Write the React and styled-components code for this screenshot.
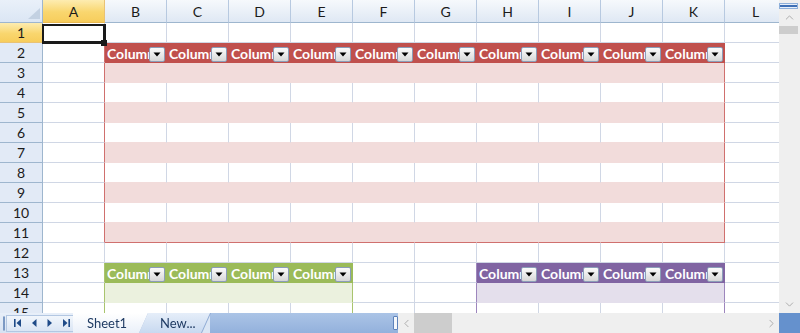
import React from 'react';
import styled, { createGlobalStyle, css } from 'styled-components';
import { ChevronUp, ChevronDown, ChevronLeft, ChevronRight } from 'lucide-react';

const GlobalStyle = createGlobalStyle`
  html, body { margin: 0; padding: 0; width: 800px; height: 333px; overflow: hidden; background: #fff; }
  body { font-family: Lato, "Open Sans", "DejaVu Sans", sans-serif; }
`;

const GRID = '#d0d7e5';
const HEAD_LINE = '#9eb6ce';
const COLS = ['A', 'B', 'C', 'D', 'E', 'F', 'G', 'H', 'I', 'J', 'K', 'L'];
const ROWS = Array.from({ length: 15 }, (_, i) => i + 1);

const TABLES = [
  { r1: 2, r2: 11, c1: 1, c2: 10, head: '#c0504d', band: '#f2dcdb', line: '#d0706e' },
  { r1: 13, r2: 99, c1: 1, c2: 4, head: '#9bbb59', band: '#ebf1de', line: '#a9c46e' },
  { r1: 13, r2: 99, c1: 7, c2: 10, head: '#8064a2', band: '#e4dfec', line: '#9d86bd' },
];

function cellInfo(r, c) {
  let info = { bg: '#fff', right: GRID, bottom: GRID, header: null };
  for (const t of TABLES) {
    const inRows = r >= t.r1 && r <= t.r2;
    if (inRows && c === t.c1 - 1) info.right = t.line;
    if (inRows && c >= t.c1 && c <= t.c2) {
      const idx = r - t.r1;
      const last = c === t.c2;
      if (idx === 0) {
        info = { bg: t.head, right: t.head, bottom: t.head, header: `Column${c - t.c1 + 1}` };
      } else {
        const banded = idx % 2 === 1;
        const nextBanded = (idx + 1) % 2 === 1 && r + 1 <= t.r2;
        info.bg = banded ? t.band : '#fff';
        info.right = last ? t.line : banded ? t.band : GRID;
        info.bottom = r === t.r2 ? t.line : banded || nextBanded ? t.band : GRID;
      }
    }
  }
  return info;
}

const Window = styled.div`
  display: flex;
  flex-direction: column;
  width: 800px;
  height: 333px;
  overflow: hidden;
`;

const Main = styled.div`
  display: flex;
  height: 313px;
`;

const Sheet = styled.div`
  flex: 1;
  min-width: 0;
  overflow: hidden;
`;

const Grid = styled.div`
  display: grid;
  grid-template-columns: 43px repeat(12, 62px);
  grid-template-rows: 23px repeat(15, 20px);
  width: max-content;
`;

const Corner = styled.div`
  box-sizing: border-box;
  background: linear-gradient(#e9f0f9, #dbe6f4);
  border-right: 1px solid ${HEAD_LINE};
  border-bottom: 1px solid ${HEAD_LINE};
  display: flex;
  justify-content: flex-end;
  align-items: flex-end;
  padding: 0 2px 3px 0;
`;

const yellow = css`
  background: linear-gradient(#fdecb0, #f9d66e 55%, #f7cd5c);
`;

const ColHeader = styled.div`
  box-sizing: border-box;
  background: linear-gradient(#f6f9fc, #dfe8f4);
  border-right: 1px solid #b7c9e0;
  border-bottom: 1px solid ${HEAD_LINE};
  display: flex;
  align-items: center;
  justify-content: center;
  font-size: 14px;
  color: #1b1b1b;
  padding-top: 1px;
  ${(p) => p.$selected && css`
    ${yellow};
    border-bottom-color: #e9b850;
    border-right-color: #e9c274;
  `}
`;

const RowHeader = styled.div`
  box-sizing: border-box;
  background: #e2eaf6;
  border-right: 1px solid ${HEAD_LINE};
  border-bottom: 1px solid ${HEAD_LINE};
  display: flex;
  align-items: center;
  justify-content: center;
  font-size: 14px;
  color: #1b1b1b;
  overflow: hidden;
  ${(p) => p.$selected && css`
    ${yellow};
    border-bottom-color: #e9c274;
  `}
`;

const Cell = styled.div`
  box-sizing: border-box;
  min-width: 0;
  background: ${(p) => p.$bg};
  border-right: 1px solid ${(p) => p.$right};
  border-bottom: 1px solid ${(p) => p.$bottom};
  display: flex;
  align-items: flex-end;
  overflow: hidden;
  ${(p) => p.$selected && css`
    position: relative;
    overflow: visible;
    z-index: 2;
    &::after {
      content: '';
      position: absolute;
      top: 1px;
      left: -1px;
      right: -2px;
      bottom: -2px;
      border-style: solid;
      border-color: #1a1a1a;
      border-width: 2px 3px 3px 2px;
    }
    &::before {
      content: '';
      position: absolute;
      width: 6px;
      height: 6px;
      right: -3px;
      bottom: -4px;
      background: #1a1a1a;
      z-index: 1;
    }
  `}
`;

const HeaderLabel = styled.span`
  flex: 1;
  min-width: 0;
  overflow: hidden;
  white-space: nowrap;
  color: #fff;
  font-weight: 700;
  font-size: 14px;
  line-height: 17px;
  padding-left: 2px;
  align-self: flex-end;
`;

const FilterButton = styled.div`
  flex: none;
  box-sizing: border-box;
  width: 16px;
  height: 15px;
  margin-right: 1px;
  border: 1px solid #8b9db8;
  border-radius: 2px;
  background: linear-gradient(#fbfbfb, #e6e6e6 60%, #d6d6d6);
  display: flex;
  align-items: center;
  justify-content: center;
`;

const VScroll = styled.div`
  width: 21px;
  flex: none;
  background: #efefef;
  display: flex;
  flex-direction: column;
`;

const SplitBox = styled.div`
  height: 6px;
  margin: 3px 2px 0 0;
  box-sizing: border-box;
  border: 1px solid #8fb0da;
  background: linear-gradient(#e6eef9 0 1px, #3e6fb5 1px 3px, #e6eef9 3px);
`;

const ArrowBox = styled.div`
  flex: none;
  display: flex;
  align-items: center;
  justify-content: center;
  color: #a3a3a3;
  width: ${(p) => p.$w || 'auto'};
  height: ${(p) => p.$h || 'auto'};
`;

const VThumb = styled.div`
  height: 8px;
  margin-right: 2px;
  background: #cdcdcd;
`;

const Spacer = styled.div`
  flex: 1;
`;

const BottomBar = styled.div`
  display: flex;
  height: 20px;
  background: #dbe6f4;
`;

const NavArea = styled.div`
  flex: none;
  width: 73px;
  box-sizing: border-box;
  display: flex;
  align-items: center;
  padding-left: 3px;
  background: linear-gradient(#e8eff9, #d6e2f2);
`;

const Grip = styled.div`
  box-sizing: border-box;
  width: 4px;
  height: 15px;
  margin-right: 1px;
  border: 1px solid #7b99c4;
  border-radius: 1px;
  background: #f6f9fd;
`;

const NavBox = styled.div`
  display: flex;
  align-items: center;
  height: 17px;
  padding-left: 3px;
  flex: 1;
  box-sizing: border-box;
  border: 1px solid #b3c7e2;
  border-right: none;
  background: linear-gradient(#f1f6fc, #dae5f4);
`;

const NavButton = styled.div`
  width: 16px;
  display: flex;
  align-items: center;
  justify-content: center;
  color: #1f4b88;
`;

const Tabs = styled.div`
  display: flex;
  flex: none;
  filter: drop-shadow(1px 0 0 #8eaad3);
`;

const Tab = styled.div`
  box-sizing: border-box;
  height: 20px;
  display: flex;
  align-items: center;
  font-size: 13px;
  color: #1f3b63;
  position: relative;
  width: ${(p) => p.$w}px;
  margin-left: ${(p) => p.$ml || 0}px;
  padding-left: ${(p) => p.$pl}px;
  z-index: ${(p) => (p.$active ? 2 : 1)};
  background: ${(p) => (p.$active ? 'linear-gradient(#ffffff, #eaf0f9)' : 'linear-gradient(#e6eef9, #c8d9f0)')};
  clip-path: ${(p) => (p.$active
    ? 'polygon(0 0, 100% 0, calc(100% - 9px) 100%, 0 100%)'
    : 'polygon(9px 0, 100% 0, calc(100% - 9px) 100%, 0 100%)')};
`;

const TabFiller = styled.div`
  flex: 1;
  background: linear-gradient(#abc4e6, #93b1dc);
`;

const Splitter = styled.div`
  flex: none;
  width: 6px;
  display: flex;
  align-items: center;
  justify-content: center;
  background: linear-gradient(#abc4e6, #93b1dc);
`;

const SplitterKnob = styled.div`
  box-sizing: border-box;
  width: 5px;
  height: 14px;
  border: 1px solid #5d82ba;
  border-radius: 1px;
  background: #f4f7fb;
`;

const HScroll = styled.div`
  flex: none;
  width: 381px;
  display: flex;
  background: #efefef;
`;

const HThumb = styled.div`
  width: 38px;
  background: #cdcdcd;
`;

const CornerBox = styled.div`
  flex: none;
  width: 21px;
  background: #6591cd;
`;

const Triangle = () => (
  <svg width="8" height="5" viewBox="0 0 8 5">
    <path d="M0.5 0.5 H7.5 L4 4.5 Z" fill="#000" />
  </svg>
);

const CornerTri = () => (
  <svg width="12" height="11" viewBox="0 0 12 11">
    <path d="M12 0 V11 H0 Z" fill="#c3d1e2" />
  </svg>
);

const NavIcon = ({ kind }) => {
  const c = 'currentColor';
  if (kind === 'first')
    return (
      <svg width="8" height="8" viewBox="0 0 8 8">
        <rect x="0" y="0" width="1.6" height="8" fill={c} />
        <path d="M7 0 V8 L2.5 4 Z" fill={c} />
      </svg>
    );
  if (kind === 'prev')
    return (
      <svg width="6" height="8" viewBox="0 0 6 8">
        <path d="M5.5 0 V8 L1 4 Z" fill={c} />
      </svg>
    );
  if (kind === 'next')
    return (
      <svg width="6" height="8" viewBox="0 0 6 8">
        <path d="M0.5 0 V8 L5 4 Z" fill={c} />
      </svg>
    );
  return (
    <svg width="8" height="8" viewBox="0 0 8 8">
      <path d="M1 0 V8 L5.5 4 Z" fill={c} />
      <rect x="6.4" y="0" width="1.6" height="8" fill={c} />
    </svg>
  );
};

export default function App() {
  return (
    <Window>
      <GlobalStyle />
      <Main>
        <Sheet>
          <Grid>
            <Corner>
              <CornerTri />
            </Corner>
            {COLS.map((l, i) => (
              <ColHeader key={l} $selected={i === 0}>
                {l}
              </ColHeader>
            ))}
            {ROWS.map((r) => (
              <React.Fragment key={r}>
                <RowHeader $selected={r === 1}>{r}</RowHeader>
                {COLS.map((_, c) => {
                  const info = cellInfo(r, c);
                  return (
                    <Cell
                      key={c}
                      $bg={info.bg}
                      $right={info.right}
                      $bottom={info.bottom}
                      $selected={r === 1 && c === 0}
                    >
                      {info.header && (
                        <>
                          <HeaderLabel>{info.header}</HeaderLabel>
                          <FilterButton>
                            <Triangle />
                          </FilterButton>
                        </>
                      )}
                    </Cell>
                  );
                })}
              </React.Fragment>
            ))}
          </Grid>
        </Sheet>
        <VScroll>
          <SplitBox />
          <ArrowBox $h="17px">
            <ChevronUp size={13} strokeWidth={1.6} />
          </ArrowBox>
          <VThumb />
          <Spacer />
          <ArrowBox $h="17px">
            <ChevronDown size={13} strokeWidth={1.6} />
          </ArrowBox>
        </VScroll>
      </Main>
      <BottomBar>
        <NavArea>
          <Grip />
          <NavBox>
            <NavButton><NavIcon kind="first" /></NavButton>
            <NavButton><NavIcon kind="prev" /></NavButton>
            <NavButton><NavIcon kind="next" /></NavButton>
            <NavButton><NavIcon kind="last" /></NavButton>
          </NavBox>
        </NavArea>
        <Tabs>
          <Tab $active $w={75} $pl={14}>Sheet1</Tab>
          <Tab $w={71} $ml={-9} $pl={21}>New...</Tab>
        </Tabs>
        <TabFiller />
        <Splitter>
          <SplitterKnob />
        </Splitter>
        <HScroll>
          <ArrowBox $w="16px">
            <ChevronLeft size={13} strokeWidth={1.6} />
          </ArrowBox>
          <HThumb />
          <Spacer />
          <ArrowBox $w="16px">
            <ChevronRight size={13} strokeWidth={1.6} />
          </ArrowBox>
        </HScroll>
        <CornerBox />
      </BottomBar>
    </Window>
  );
}
